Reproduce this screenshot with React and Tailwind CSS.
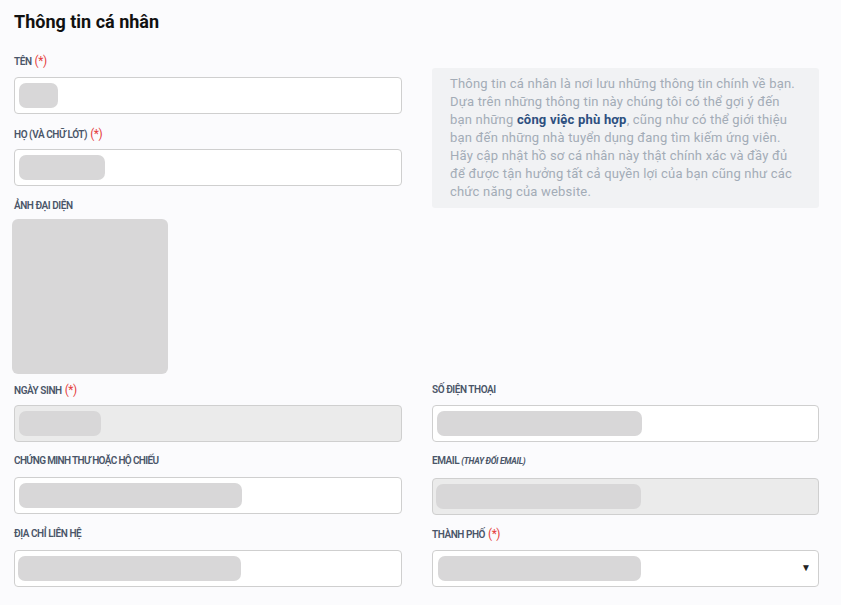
import React from "react";

const Req = () => (
  <span className="ml-[3px] text-[12px] font-normal text-[#e53e3e]">(*)</span>
);

const Label = ({ children, className = "", track = "tracking-[-0.45px]" }) => (
  <div
    className={`h-[20px] text-[10px] leading-[20px] font-semibold text-[#4a5568] whitespace-nowrap ${track} ${className}`}
  >
    {children}
  </div>
);

const Pill = ({ w, className = "" }) => (
  <div className={`h-[25px] rounded-[7px] bg-[#d8d7d8] ${w} ${className}`} />
);

const Input = ({ pill, disabled, select, pillClass = "ml-[4px]" }) => (
  <div
    className={`relative flex h-[37px] items-center rounded-[4px] border border-[#cfcfcf] ${
      disabled ? "bg-[#ebebeb]" : "bg-white"
    }`}
  >
    <Pill w={pill} className={pillClass} />
    {select && (
      <span className="absolute right-[7px] top-[12px] text-[10px] leading-[10px] text-[#222]">▼</span>
    )}
  </div>
);

export default function App() {
  return (
    <div
      className="min-h-[605px] w-[841px] bg-[#fbfbfd] pl-[14px] pr-[22px]"
      style={{ fontFamily: "Roboto, 'Noto Sans', sans-serif" }}
    >
      <h1 className="pt-[10px] text-[18px] leading-[24px] font-bold text-[#111]">
        Thông tin cá nhân
      </h1>

      <div className="mt-[17px] grid grid-cols-[388px_387px] gap-x-[30px]">
        {/* left top */}
        <div>
          <Label>
            TÊN<Req />
          </Label>
          <div className="mt-[6px]">
            <Input pill="w-[39px]" />
          </div>
          <Label className="mt-[10px]">
            HỌ (VÀ CHỮ LÓT)<Req />
          </Label>
          <div className="mt-[5px]">
            <Input pill="w-[86px]" />
          </div>
          <Label className="mt-[10px]">ẢNH ĐẠI DIỆN</Label>
          <div className="-ml-[2px] mt-[3px] h-[155px] w-[156px] rounded-[6px] bg-[#d8d7d8]" />
        </div>

        {/* right top */}
        <div className="pt-[17px]">
          <div className="rounded-[3px] bg-[#f1f2f4] px-[18px] py-[7px] text-[13px] leading-[18px] tracking-[0.2px] text-[#a3acb7] whitespace-nowrap">
            Thông tin cá nhân là nơi lưu những thông tin chính về bạn.
            <br />
            Dựa trên những thông tin này chúng tôi có thể gợi ý đến
            <br />
            bạn những{" "}
            <span className="font-bold text-[#2d4f7f]">công việc phù hợp</span>, cũng
            như có thể giới thiệu
            <br />
            bạn đến những nhà tuyển dụng đang tìm kiếm ứng viên.
            <br />
            Hãy cập nhật hồ sơ cá nhân này thật chính xác và đầy đủ
            <br />
            để được tận hưởng tất cả quyền lợi của bạn cũng như các
            <br />
            chức năng của website.
          </div>
        </div>

        {/* row 1 */}
        <div className="mt-[6px]">
          <Label>
            NGÀY SINH<Req />
          </Label>
          <div className="mt-[5px]">
            <Input pill="w-[82px]" disabled />
          </div>
        </div>
        <div className="mt-[6px]">
          <Label>SỐ ĐIỆN THOẠI</Label>
          <div className="mt-[5px]">
            <Input pill="w-[205px]" />
          </div>
        </div>

        {/* row 2 */}
        <div className="mt-[9px]">
          <Label track="tracking-[-0.65px]">CHỨNG MINH THƯ HOẶC HỘ CHIẾU</Label>
          <div className="mt-[6px]">
            <Input pill="w-[223px]" />
          </div>
        </div>
        <div className="mt-[9px]">
          <Label>
            EMAIL{" "}
            <span className="text-[8.5px] font-bold italic tracking-[-0.3px]">(THAY ĐỔI EMAIL)</span>
          </Label>
          <div className="mt-[7px]">
            <Input pill="w-[205px]" disabled pillClass="ml-[3px]" />
          </div>
        </div>

        {/* row 3 */}
        <div className="mt-[9px]">
          <Label>ĐỊA CHỈ LIÊN HỆ</Label>
          <div className="mt-[6px]">
            <Input pill="w-[223px]" pillClass="ml-[3px]" />
          </div>
        </div>
        <div className="mt-[9px]">
          <Label>
            THÀNH PHỐ<Req />
          </Label>
          <div className="mt-[6px]">
            <Input pill="w-[203px]" select pillClass="ml-[5px]" />
          </div>
        </div>
      </div>
    </div>
  );
}
